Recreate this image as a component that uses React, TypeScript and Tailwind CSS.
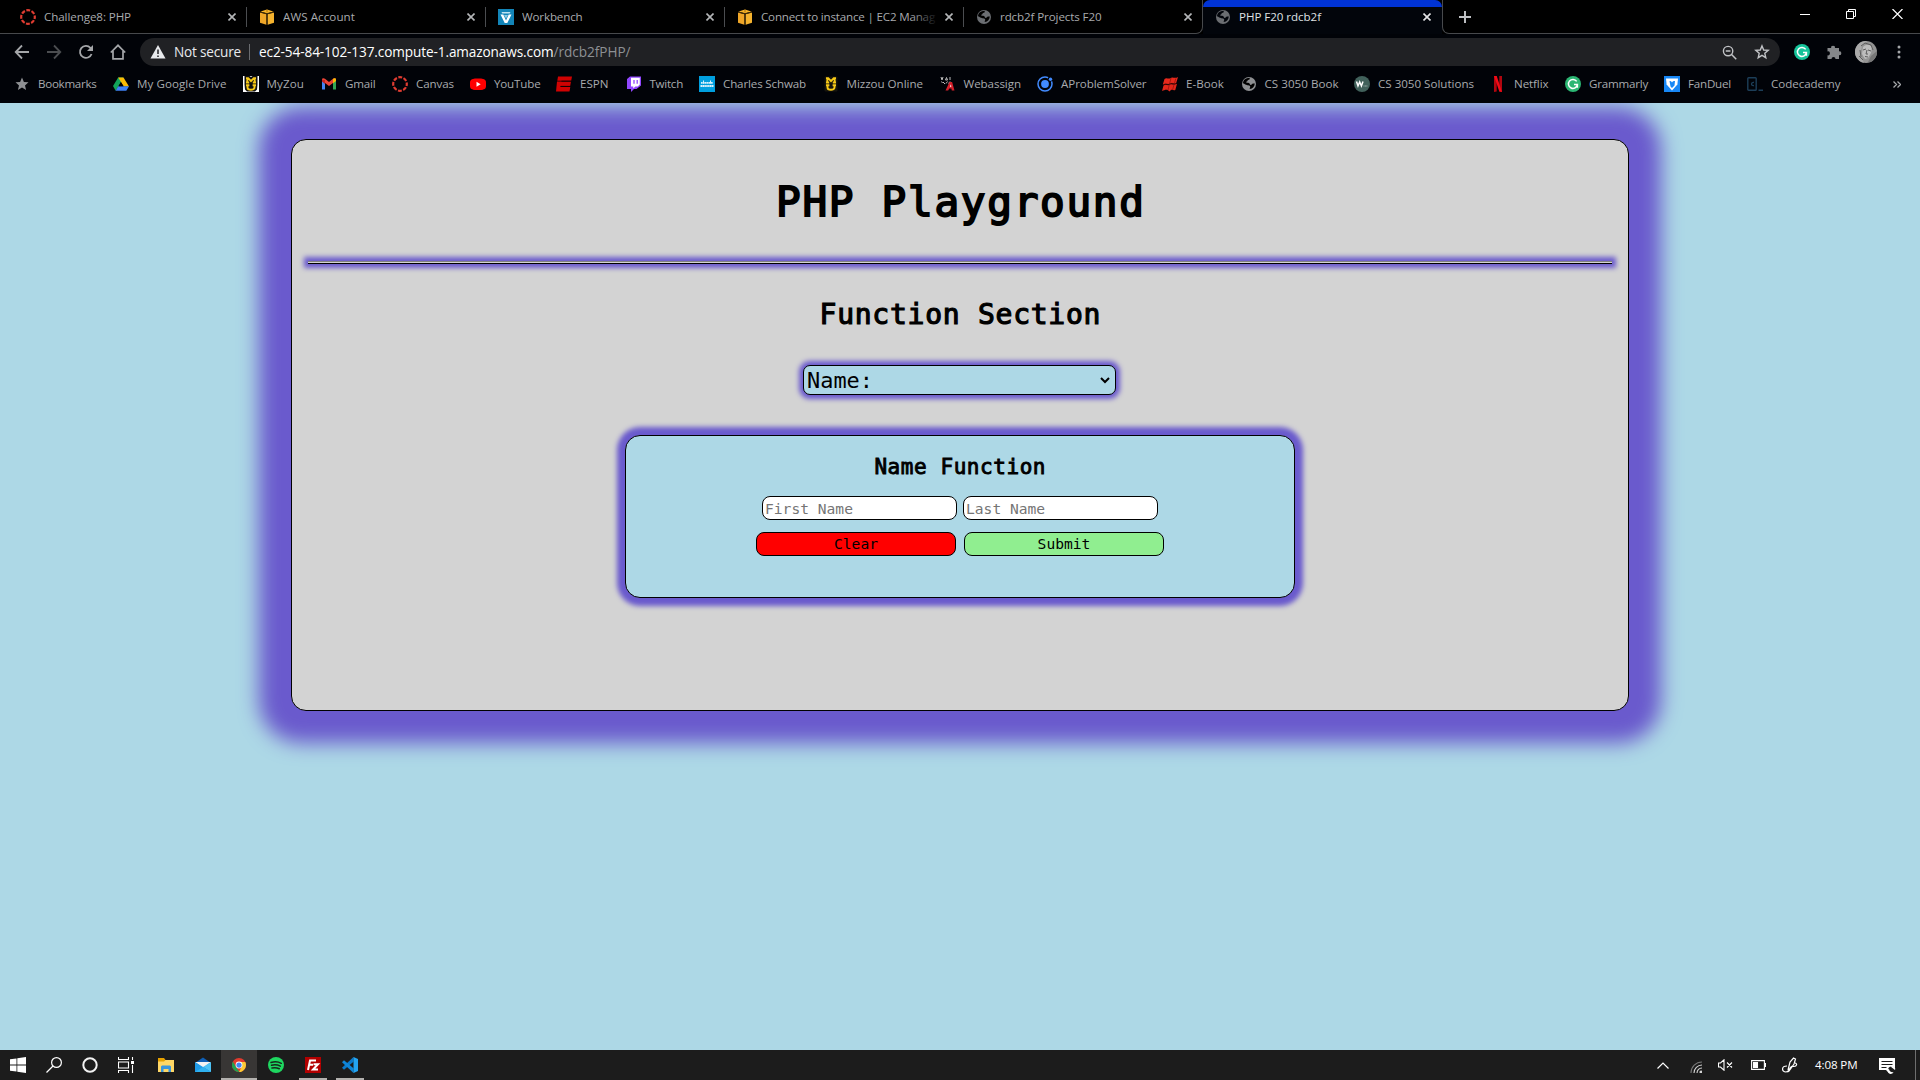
import React, { useLayoutEffect, useRef, useState } from "react";

type FitProps = { text: string; width: number; className?: string };

/* Single-line label whose tracking is adjusted so it fills a given width. */
function Fit({ text, width, className = "" }: FitProps) {
  const ref = useRef<HTMLSpanElement>(null);
  const [spacing, setSpacing] = useState(0);
  useLayoutEffect(() => {
    if (ref.current) {
      const natural = ref.current.getBoundingClientRect().width;
      setSpacing((width - natural) / text.length);
    }
  }, []);
  return (
    <span ref={ref} className={"inline-block whitespace-pre shrink-0 " + className} style={{ letterSpacing: spacing + "px" }}>
      {text}
    </span>
  );
}

const I = ({ children, s = 16, c = "" }: { children: React.ReactNode; s?: number; c?: string }) => (
  <svg width={s} height={s} viewBox="0 0 16 16" fill="none" className={"shrink-0 block " + c}>
    {children}
  </svg>
);

const Canvas = () => (
  <I>
    <circle cx="8" cy="8" r="6.8" stroke="#e03c31" strokeWidth="2.2" strokeDasharray="3.9 1.44" strokeDashoffset="1.9" />
  </I>
);
const Aws = () => (
  <I>
    <path d="M1 3.600l6.400 1.600v10.600L1 13.800z" fill="#efa628" />
    <path d="M15 3.600L8.600 5.200v10.600l6.400-2z" fill="#f5b32e" />
    <path d="M1.500 2.400L8 .4l6.500 2L8 4.200z" fill="#f8b428" />
    <path d="M8 4.800V16M1 3l7 1.800L15 3" stroke="#4b3208" strokeWidth=".9" />
    <path d="M8 .4v3" stroke="#8a5c10" strokeWidth=".7" />
  </I>
);
const Workbench = () => (
  <I>
    <rect width="16" height="16" fill="#1385b8" />
    <path d="M2.500 5.500h2.800L8 11.500l2.700-6h2.800L9.300 14H6.700z" fill="#fff" />
    <path d="M3.500 3h9l-.8 1.500H4.300z" fill="#bfe3f1" />
    <path d="M6 6h4l-2 3.500z" fill="#8fcbe4" />
  </I>
);
const Globe = ({ fill = "#6b6e72", bg = "#000" }: { fill?: string; bg?: string }) => (
  <I>
    <circle cx="8" cy="8" r="7" fill={fill} />
    <path d="M8.600 1.800c.6 1.600-.4 2-1.600 2.300-.6.2-.2 1.200-1.200 1.400-.9.2-.8 1.200.2 1.300 1.700 0 2.600.3 2.900 1.500.2 1 1.600 1 1.900 0 .3-.9 1.500-1 3-.8-.2 3-2 5.300-5 5.600-.4-1 .6-1.700.4-2.700-.3-1.200-2-1-3-1.200C4.800 9 3.700 8 2 7.300c.2-3.300 2.800-5.400 6.600-5.500z" fill={bg} />
    <path d="M10 2.800c.8.8-.2 1.800.8 2.400.8.5 1.600.6 2 .2z" fill={fill} />
  </I>
);

const Star = () => (
  <I>
    <path d="M8 1.600l1.900 4.300 4.600.4-3.500 3.100 1.100 4.600L8 11.500l-4.100 2.500L5 9.400 1.500 6.300l4.600-.4z" fill="#8e9093" />
  </I>
);
const Drive = () => (
  <I>
    <path d="M5.200 1.500h5.200L5.600 10 2.700 14.700 0 10z" fill="#12a45a" />
    <path d="M5.200 1.500h5.300L16 10.600h-5.200z" fill="#fbbc05" />
    <path d="M5.200 10.200H16l-2.700 4.600H2.600z" fill="#3f82f5" />
    <path d="M7.900 6.200l2.500 4H5.500z" fill="#000205" />
  </I>
);
/* Stacked slab letters: an M over a U. */
const MuGlyph = () => (
  <>
    <path d="M3 2.100h2.200L8 5.200l2.800-3.100H13M4.300 2.100v4.300M11.700 2.100v4.300M3 6.500h3.200M9.800 6.500H13" stroke="#f7c917" strokeWidth="1.900" />
    <path d="M3 9.200h3.400M9.600 9.200H13M4.500 9.200v2.300c0 3 7 3 7 0V9.200" stroke="#f7c917" strokeWidth="1.900" />
  </>
);
const MyZou = () => (
  <I>
    <rect width="16" height="16" fill="#fff" />
    <path d="M1.500 0h5L8 1l1.500-1h5v8.500l-.5 5-2 2H4l-2-2-.5-5z" fill="#111" />
    <MuGlyph />
  </I>
);
const Mizzou = () => (
  <I>
    <rect x="1.500" y=".5" width="13" height="15" rx="1" fill="#16150d" />
    <MuGlyph />
  </I>
);
const Gmail = () => (
  <I>
    <path d="M1 3.800v9.700h3V7z" fill="#4285f4" />
    <path d="M12 7v6.500h3V3.800z" fill="#34a853" />
    <path d="M1 3.500C1 2 3 2 4 2.800L8 6l4-3.200c1-.8 3-.8 3 .7l-1 2L8 10 2 5.500z" fill="#ea4335" />
    <path d="M12 2.800c1-.8 3-.8 3 .8V5l-3 2.300z" fill="#fbbc04" />
    <path d="M1 4v1.500L4 8V4z" fill="#c5221f" />
  </I>
);
const YouTube = () => (
  <I>
    <rect x="2" y="2.500" width="12" height="11.500" rx="3" fill="#f00" />
    <rect x="0" y="3" width="16" height="10.500" rx="3.500" fill="#f00" />
    <path d="M6.500 5.800v4.900l4.200-2.400z" fill="#fff" />
  </I>
);
const Espn = () => (
  <I>
    <path d="M2 .5h14l-.8 4.200H1.300zM1 5.600h14l-.8 4.300H4.800l-.3 1.200h9.800l-.8 4.400H0z" fill="#d00202" />
    <path d="M5.500 5.200H15.500M4.500 10.400h10" stroke="#1a0002" strokeWidth=".9" />
  </I>
);
const Twitch = () => (
  <I>
    <path d="M1 3l3-2.500h11v9L10.500 13H8l-3 3v-3H1z" fill="#9147ff" />
    <path d="M5 1.800h8.800v6.800l-2 2H9.300l-2 1.900v-1.900H5z" fill="#fff" />
    <path d="M8 4v3.700M11.200 4v3.700" stroke="#9147ff" strokeWidth="1.300" />
  </I>
);
const Schwab = () => (
  <I>
    <rect width="16" height="16" fill="#009fdf" />
    <path d="M2 6.800h12M1.500 10h13" stroke="#d9f1fb" strokeWidth="1.800" strokeDasharray="1.600 .3" />
    <path d="M4.500 4.500v3M11.500 4.500v3" stroke="#d9f1fb" strokeWidth="1" />
  </I>
);
const Webassign = () => (
  <I>
    <path d="M1 1l1 3 1-3M6.500 1.500L5.500 4h2zM10 1v3M3 6l2 2M7.500 5.500L6 7.500M10 5.500l-1.500 2M1.500 5.500l1 1.500" stroke="#bdbdbd" strokeWidth="1" />
    <path d="M5.500 14.500L9.500 6h2.600l2.400 8.500h-2.700l-.4-1.900H9.200l-1 1.900z" fill="#d3202a" />
    <path d="M9.800 10.800l1.100-2.300.4 2.300z" fill="#fff" />
  </I>
);
const AProblem = () => (
  <I>
    <circle cx="8" cy="8" r="7" stroke="#428bff" strokeWidth="1.500" strokeDasharray="36 5 3" />
    <circle cx="8" cy="8" r="3.900" fill="#428bff" />
    <circle cx="13.500" cy="3.200" r="1.700" fill="#428bff" />
  </I>
);
const EBook = () => (
  <I>
    <path d="M2.500 3C4.500 1 6.500 3.500 8.300 2.200 10.500.5 13 3 16 1l-1.800 6c-2 1.300-3.700-1-5.500.3C6.500 9 4 6.500 .8 8.500z" fill="#e8291c" />
    <path d="M1.500 9.500C4 7.500 5.500 10 7.500 8.800c2.500-1.600 4.500.8 7.500-1L13.300 14c-1.700 1-3-1-4.500 0L7.800 15.500 5.500 14c-2-.5-3.500 .5-5.500 1z" fill="#e3261a" />
    <path d="M9 2L6 14M13.800 2.500L10.500 14M1 8.900c3-2 5 .2 7.300-1 2-1.500 4 .6 6-.6" stroke="#7c0d08" strokeWidth=".6" />
  </I>
);
const Wac = () => (
  <I>
    <circle cx="8" cy="8" r="8" fill="#41615b" />
    <path d="M2.500 5.500L4 10l1.700-4L7.400 10 9 5.500" stroke="#fff" strokeWidth="1.500" />
    <path d="M9.500 10h4.300" stroke="#9fb3ae" strokeWidth="1.200" strokeDasharray="1 .4" />
  </I>
);
const Netflix = () => (
  <I>
    <path d="M4 0v16l2.700-.4V0zM9.300 0v15.600L12 16V0z" fill="#b1060f" />
    <path d="M4 0h2.700L12 16l-2.700-.4z" fill="#f20a16" />
  </I>
);
const Grammarly = ({ fill = "#2bb673" }: { fill?: string }) => (
  <I>
    <circle cx="8" cy="8" r="8" fill={fill} />
    <path d="M11.700 5.400A4.500 4.500 0 1 0 12.400 8.600H9M12.400 8.600v3.200" stroke="#fff" strokeWidth="1.500" />
  </I>
);
const FanDuel = () => (
  <I>
    <rect width="16" height="16" fill="#1787f5" />
    <path d="M2 2.500h12l-.6 6L8 14.500 2.600 8.500z" fill="#fff" />
    <path d="M5.500 5l1 5.500L8 12l2.500-2.500L11 5c-1.500 0-2.400.4-3 1.500C7.500 5.400 6.500 5 5.500 5z" fill="#1787f5" />
  </I>
);
const Codecademy = () => (
  <I>
    <rect x=".8" y="1.800" width="8.400" height="12.400" rx=".8" stroke="#1c3e58" strokeWidth="1.400" />
    <path d="M7 6.500c-3-1-3.500 4 0 3M11.500 14.200H16" stroke="#1c3e58" strokeWidth="1.400" />
  </I>
);

const tabs = [
  { icon: <Canvas />, text: "Challenge8: PHP", w: 87 },
  { icon: <Aws />, text: "AWS Account", w: 72 },
  { icon: <Workbench />, text: "Workbench", w: 60.5 },
  { icon: <Aws />, text: "Connect to instance | EC2 Manag", w: 174 },
  { icon: <Globe />, text: "rdcb2f Projects F20", w: 101.5 },
];

const bookmarks = [
  { icon: <Star />, text: "Bookmarks", w: 58.5, slot: 99 },
  { icon: <Drive />, text: "My Google Drive", w: 89.5, slot: 129.5 },
  { icon: <MyZou />, text: "MyZou", w: 37.5, slot: 78.5 },
  { icon: <Gmail />, text: "Gmail", w: 30.5, slot: 71 },
  { icon: <Canvas />, text: "Canvas", w: 38, slot: 78 },
  { icon: <YouTube />, text: "YouTube", w: 46.5, slot: 86 },
  { icon: <Espn />, text: "ESPN", w: 28.5, slot: 69.5 },
  { icon: <Twitch />, text: "Twitch", w: 33.5, slot: 73.5 },
  { icon: <Schwab />, text: "Charles Schwab", w: 83, slot: 123.5 },
  { icon: <Mizzou />, text: "Mizzou Online", w: 76.5, slot: 117 },
  { icon: <Webassign />, text: "Webassign", w: 57.5, slot: 97.5 },
  { icon: <AProblem />, text: "AProblemSolver", w: 85.5, slot: 125 },
  { icon: <EBook />, text: "E-Book", w: 38, slot: 78.5 },
  { icon: <Globe fill="#8e9093" />, text: "CS 3050 Book", w: 74, slot: 113.5 },
  { icon: <Wac />, text: "CS 3050 Solutions", w: 96, slot: 136 },
  { icon: <Netflix />, text: "Netflix", w: 34.5, slot: 75 },
  { icon: <Grammarly />, text: "Grammarly", w: 59, slot: 99 },
  { icon: <FanDuel />, text: "FanDuel", w: 43, slot: 83 },
  { icon: <Codecademy />, text: "Codecademy", w: 69.5, slot: 110 },
];

const X = ({ stroke }: { stroke: string }) => (
  <I s={8}>
    <path d="M1 1l14 14M15 1L1 15" stroke={stroke} strokeWidth="3.2" />
  </I>
);

function TabStrip() {
  return (
    <div className="flex h-[34px] bg-black text-[11.6px] text-[#a8aaad]">
      <div className="w-2 border-b border-[#47494c]" />
      {tabs.map((t, i) => (
        <div key={i} className={"flex w-[239px] items-center border-b border-[#47494c] pl-3 " + (i === 4 ? "rounded-br-[7px] border-r" : "")}>
          {t.icon}
          <div className="relative ml-2 w-[184px] shrink-0 overflow-hidden leading-5">
            <Fit text={t.text} width={t.w} className="align-top" />
            {i === 3 && <div className="absolute top-0 left-[150px] h-5 w-[34px] bg-linear-to-r from-transparent to-black to-80%" />}
          </div>
          <X stroke="#b4b6b8" />
          {i !== 4 && <div className="ml-[10px] h-5 w-px shrink-0 bg-[#4b4d50]" />}
        </div>
      ))}
      <div className="flex w-[239px] flex-col overflow-hidden rounded-t-[7px] bg-[#02050b]">
        <div className="h-[7px] bg-[#0033d6]" />
        <div className="-mt-[7px] flex h-[34px] items-center pl-[12px] text-[#dfe1e3]">
          <Globe bg="#02050b" />
          <div className="ml-[8px] w-[184px] shrink-0">
            <Fit text="PHP F20 rdcb2f" width={82} />
          </div>
          <X stroke="#e3e4e6" />
        </div>
      </div>
      <div className="flex flex-1 items-center rounded-bl-[7px] border-b border-l border-[#47494c] pl-[16px]">
        <I s={12}>
          <path d="M8 0v16M0 8h16" stroke="#bfc1c4" strokeWidth="2.6" />
        </I>
        <div className="mb-[6px] ml-auto flex items-center gap-[36px] pr-[17px]">
          <svg width="10" height="10"><path d="M0 5.500h10" stroke="#fff" /></svg>
          <svg width="10" height="10" fill="none" stroke="#fff"><path d="M.5 2.500h7v7h-7zM2.500 2.500v-2h7v7h-2" /></svg>
          <svg width="11" height="10" stroke="#fff" strokeWidth="1.2"><path d="M.5 0l10 10M10.500 0l-10 10" /></svg>
        </div>
      </div>
    </div>
  );
}

function Toolbar() {
  return (
    <div className="flex h-9 items-center">
      <div className="ml-[14px] flex items-center gap-4">
        <I><path d="M15 8H2M8 1.500L1.700 8 8 14.500" stroke="#a4a6a9" strokeWidth="1.8" /></I>
        <I><path d="M1 8h13M8 1.500L14.300 8 8 14.500" stroke="#4b4d50" strokeWidth="1.8" /></I>
        <I><path d="M13.600 10A6 6 0 1 1 12.400 3.800L14 5.500" stroke="#a4a6a9" strokeWidth="1.8" /><path d="M15 1v6H9z" fill="#a4a6a9" /></I>
        <I><path d="M.8 8.500L8 1.300l7.200 7.200M3 7v7.800h10V7" stroke="#a4a6a9" strokeWidth="1.7" /></I>
      </div>
      <div className="ml-[14px] flex h-7 w-[1640px] items-center rounded-full bg-[#202124] text-[13.6px]">
        <I c="ml-[10px]">
          <path d="M8 1l7.500 13.500H.5z" fill="#e8eaed" />
          <path d="M8 5.500v4.500M8 11.500v1.600" stroke="#202124" strokeWidth="1.5" />
        </I>
        <Fit text="Not secure" width={67} className="ml-2 text-[#e8eaed]" />
        <div className="ml-2 h-4 w-px bg-[#6a6c70]" />
        <Fit text="ec2-54-84-102-137.compute-1.amazonaws.com" width={294.5} className="ml-[9px] text-white" />
        <Fit text="/rdcb2fPHP/" width={77} className="text-[#8d9094]" />
        <I s={15} c="ml-auto">
          <circle cx="6.500" cy="6.500" r="5" stroke="#c1c3c6" strokeWidth="1.5" />
          <path d="M4 6.500h5M10.200 10.200l5 5" stroke="#c1c3c6" strokeWidth="1.6" />
        </I>
        <I c="ml-[17px] mr-[10px]">
          <path d="M8 1.900l1.700 4.100 4.500.4-3.400 2.900 1 4.400L8 11.400l-3.800 2.300 1-4.400L1.800 6.400 6.300 6z" stroke="#c1c3c6" strokeWidth="1.4" />
        </I>
      </div>
      <div className="ml-[14px]"><Grammarly fill="#15c39a" /></div>
      <I c="ml-4">
        <path d="M1.500 4h3.700a1.900 1.900 0 1 1 3.700 0H13v3.400a1.900 1.900 0 1 1 0 3.700V15H9.500a2 2 0 1 0-4 0h-4v-3.700a2 2 0 1 0 0-3.900z" fill="#85878a" />
      </I>
      <svg width="22" height="22" viewBox="0 0 22 22" className="ml-[13px] shrink-0">
        <defs><clipPath id="av"><circle cx="11" cy="11" r="11" /></clipPath></defs>
        <g clipPath="url(#av)">
          <rect width="22" height="22" fill="#949494" />
          <path d="M0 0h12L7 5l-2 8 4 9H0z" fill="#aaa" />
          <path d="M8 6c3-3 7-3 9 0l-1 6-3 5-3 1-3-5z" fill="#bdbdbd" />
          <path d="M8 9l3-1M13 9l3 1M12 9l-1 4h2M10 15.500l3 .5M6 5l4-3 6 2 2 5M5 9l1 7M4 15l4 4" stroke="#5c5c5c" strokeWidth="1" fill="none" />
          <path d="M16 15l6-5v11h-9z" fill="#777" />
        </g>
      </svg>
      <svg width="4" height="14" className="ml-[20px]" fill="#a4a6a9"><circle cx="2" cy="2" r="1.500" /><circle cx="2" cy="7" r="1.500" /><circle cx="2" cy="12" r="1.500" /></svg>
    </div>
  );
}

function BrowserChrome() {
  return (
    <header className="h-[103px] bg-[#010308] font-['Open_Sans',sans-serif]">
      <TabStrip />
      <Toolbar />
      <div className="flex h-7 items-center pl-[14px] text-[11.6px] text-[#a8aaad]">
        {bookmarks.map((b) => (
          <div key={b.text} className="flex shrink-0 items-center gap-2" style={{ width: b.slot }}>
            {b.icon}
            <Fit text={b.text} width={b.w} />
          </div>
        ))}
        <svg width="8" height="7" className="mr-[19px] ml-auto" fill="none" stroke="#a6a8ab" strokeWidth="1.3"><path d="M.5 .5l3 3-3 3M4.500 .5l3 3-3 3" /></svg>
      </div>
    </header>
  );
}

const field = "h-6 w-[195px] rounded-[8px] border border-black bg-white px-[2px] placeholder:text-[#757575]";

function Page() {
  return (
    <main className="flex h-[947px] flex-col items-center overflow-hidden bg-[#add8e6] pt-9 font-['DejaVu_Sans_Mono',monospace] text-black">
      <section className="flex h-[572px] w-[1338px] shrink-0 flex-col items-center rounded-[15px] border border-black bg-[#d3d3d3] px-4 pt-[34px] shadow-[0_0_20px_32px_#6a5acd]">
        <h1 className="h-14 pl-[1.7px] text-[41px] leading-14 tracking-[1.72px] [-webkit-text-stroke:1.9px_#000]">PHP Playground</h1>
        <div className="mt-[31px] h-[3px] w-[1304px] shrink-0 border-t border-b border-t-[#808080] border-b-black bg-[#d3d3d3] shadow-[0_0_5px_4px_#6a5acd]" />
        <h2 className="mt-[31px] h-10 pl-[0.7px] text-[28px] leading-10 tracking-[0.74px] [-webkit-text-stroke:1.2px_#000]">Function Section</h2>
        <div className="mt-[30px] mr-[1px] flex h-[30px] w-[313px] shrink-0 items-center justify-between rounded-[7px] border border-black bg-[#add8e6] pr-[5px] pl-[3px] text-[21.92px] leading-7 shadow-[0_0_5px_4px_#6a5acd]">
          <span className="pt-[2px]">Name:</span>
          <svg width="10" height="7" fill="none" stroke="#000" strokeWidth="2"><path d="M1 1l4 4 4-4" /></svg>
        </div>
        <div className="mt-10 flex h-[163px] w-[670px] shrink-0 flex-col items-center rounded-[15px] border border-black bg-[#add8e6] pt-[17px] shadow-[0_0_5px_8px_#6a5acd]">
          <h3 className="h-7 pl-[0.5px] text-[21px] leading-7 tracking-[0.56px] [-webkit-text-stroke:0.9px_#000]">Name Function</h3>
          <div className="mt-[15px] flex gap-[6px] text-[14.61px]">
            <input placeholder="First Name" className={field} />
            <input placeholder="Last Name" className={field} />
          </div>
          <div className="mt-3 flex gap-2 text-[14.61px] leading-[22px]">
            <button className="h-6 w-[200px] rounded-[8px] border border-black bg-[#ff0000]">Clear</button>
            <button className="h-6 w-[200px] rounded-[8px] border border-black bg-[#90ee90]">Submit</button>
          </div>
        </div>
      </section>
    </main>
  );
}

const cell = "flex h-[30px] shrink-0 items-center justify-center ";

function Taskbar() {
  return (
    <footer className="flex h-[30px] items-center bg-[#1c1c1c] font-['Open_Sans',sans-serif] text-white">
      <div className={cell + "w-9"}>
        <I><path d="M0 2.300L6.500 1.400v6.200H0zM7.300 1.300L16 0v7.600H7.300zM0 8.400h6.500v6.200L0 13.700zM7.300 8.400H16V16l-8.700-1.300z" fill="#fff" /></I>
      </div>
      <div className={cell + "w-9"}>
        <I><circle cx="10.500" cy="5.500" r="4.900" stroke="#fff" strokeWidth="1.2" /><path d="M7 9L.5 15.500" stroke="#fff" strokeWidth="1.3" /></I>
      </div>
      <div className={cell + "w-9"}>
        <I><circle cx="8" cy="8" r="6.700" stroke="#f2f2f2" strokeWidth="2" /></I>
      </div>
      <div className={cell + "w-9"}>
        <I>
          <path d="M.5 0v2.500h10V0M.5 5h10v6H.5zM.5 16v-2.500h10V16M14.500 0v3M14.500 8v8" stroke="#fff" strokeWidth="1.1" />
          <rect x="13" y="4" width="3" height="3" fill="#fff" />
        </I>
      </div>
      <div className={cell + "ml-[3px] w-[37px]"}>
        <I>
          <path d="M0 1h6l1.500 2H16v12H0z" fill="#e6a100" />
          <path d="M0 4.500h6L7.500 3H16v12H0z" fill="#ffd766" />
          <path d="M3 15V9.500L4 8.500h8l1 1V15h-2.500v-3h-5v3z" fill="#3a96dd" />
        </I>
      </div>
      <div className={cell + "w-[37px]"}>
        <I>
          <path d="M0 6l8-5.500L16 6v9H0z" fill="#0f5fb5" />
          <path d="M0 5h16L8 11z" fill="#f3f3f3" />
          <path d="M0 5l16 10H0z" fill="#1f9be8" />
          <path d="M16 5v10L8 10z" fill="#4cc3f5" />
          <path d="M0 15l8-5 8 5z" fill="#2fb1f0" />
        </I>
      </div>
      <div className={cell + "w-9 border-b-2 border-[#b3b1ae] bg-[#383635] pt-[2px]"}>
        <I s={14}>
          <circle cx="8" cy="8" r="8" fill="#e33b2e" />
          <path d="M1.100 4L5 11l3.500 5A8 8 0 0 1 1.100 4z" fill="#1fa351" />
          <path d="M15.200 4.500A8 8 0 0 1 8 16l3.500-7-2-4.500z" fill="#fcc934" />
          <circle cx="8" cy="8" r="3.900" fill="#fff" />
          <circle cx="8" cy="8" r="3" fill="#4285f4" />
        </I>
      </div>
      <div className={cell + "w-[38px]"}>
        <I>
          <circle cx="8" cy="8" r="8" fill="#1ed760" />
          <path d="M3 5.500c3.500-1 7.500-.7 10.300.8M3.500 8.300c3-.8 6.200-.5 8.800.9M4 11c2.500-.6 5-.4 7.300.7" stroke="#16291c" strokeWidth="1.5" strokeLinecap="round" />
        </I>
      </div>
      <div className={cell + "ml-1 w-7 border-b-2 border-[#b3b1ae] pt-[2px]"}>
        <I>
          <rect width="16" height="16" fill="#b30000" />
          <path d="M3 13L5 3.500h6M4.500 7.800H8M8.500 7.200h4.500L8 12.500h5" stroke="#fff" strokeWidth="2" />
        </I>
      </div>
      <div className={cell + "ml-[9px] w-7 border-b-2 border-[#b3b1ae] pt-[2px]"}>
        <I>
          <path d="M11.500 0v4.800L2 12.700l-2-1.900z" fill="#0a7acc" />
          <path d="M11.500 16v-4.800L2 3.300 0 5.200z" fill="#0f86d8" />
          <path d="M11.500 0L16 2v12l-4.500 2z" fill="#23a4f2" />
        </I>
      </div>

      <svg width="12" height="7" className="mr-[21px] ml-auto" fill="none" stroke="#fff" strokeWidth="1.2"><path d="M.5 6.500L6 1l5.500 5.500" /></svg>
      <svg width="12" height="12" className="mt-1 mr-[16px]" fill="none" stroke="#d5d5d5" strokeWidth="1.1">
        <path d="M1 12A11 11 0 0 1 12 1" stroke="#777" /><path d="M4 12a8 8 0 0 1 8-8M7 12a5 5 0 0 1 5-5" /><circle cx="11" cy="11" r="1" fill="#fff" />
      </svg>
      <svg width="15" height="12" className="mr-[18px]" fill="none" stroke="#fff" strokeWidth="1.1">
        <path d="M.5 4h2L6 .8v10.400L2.500 8h-2zM9 3.500l5 5M14 3.500l-5 5" />
      </svg>
      <svg width="15" height="10" className="mr-[16px]" fill="none" stroke="#fff" strokeWidth="1.1"><path d="M.6 .6h12.800v8.800H.6z" /><path d="M14.500 3v4" /><path d="M2.500 2.500h4v5h-4z" fill="#fff" /></svg>
      <svg width="17" height="17" className="mr-[16px]" fill="none" stroke="#fff" strokeWidth="1.2">
        <path d="M6 13L8 5l3.500-4 2 1L12 7l-5 7-1.500 1M5 9c-6 0-5.500 6-1 6 3 0 3-3 5-5 1.500-1.500 2-.5 3-.5 3 0 3.500-3 1-3.500" />
      </svg>
      <div className="w-[43px] text-[11.6px] leading-4"><Fit text="4:08 PM" width={42.5} className="align-top" /></div>
      <svg width="17" height="17" viewBox="0 0 17 17" className="ml-[21px]">
        <path d="M0 1h16v12h-3l-3 3-3-3H0z" fill="#fff" />
        <path d="M2.500 4.500h11M2.500 7.500h11M2.500 10.500h5" stroke="#1c1c1c" strokeWidth="1.1" />
        <circle cx="12.500" cy="13" r="3.500" fill="#1c1c1c" />
        <path d="M10 11.500a3 3 0 1 0 4.500 3.500A3.500 3.500 0 0 1 10 11.500zM11.500 9.500a3 3 0 0 1 4.500 3.500z" fill="#fff" />
      </svg>
      <div className="mr-1 ml-[19px] h-[30px] w-px bg-[#6e6e6e]" />
    </footer>
  );
}

export default function App() {
  return (
    <div className="flex h-[1080px] w-[1920px] flex-col overflow-hidden">
      <BrowserChrome />
      <Page />
      <Taskbar />
    </div>
  );
}
